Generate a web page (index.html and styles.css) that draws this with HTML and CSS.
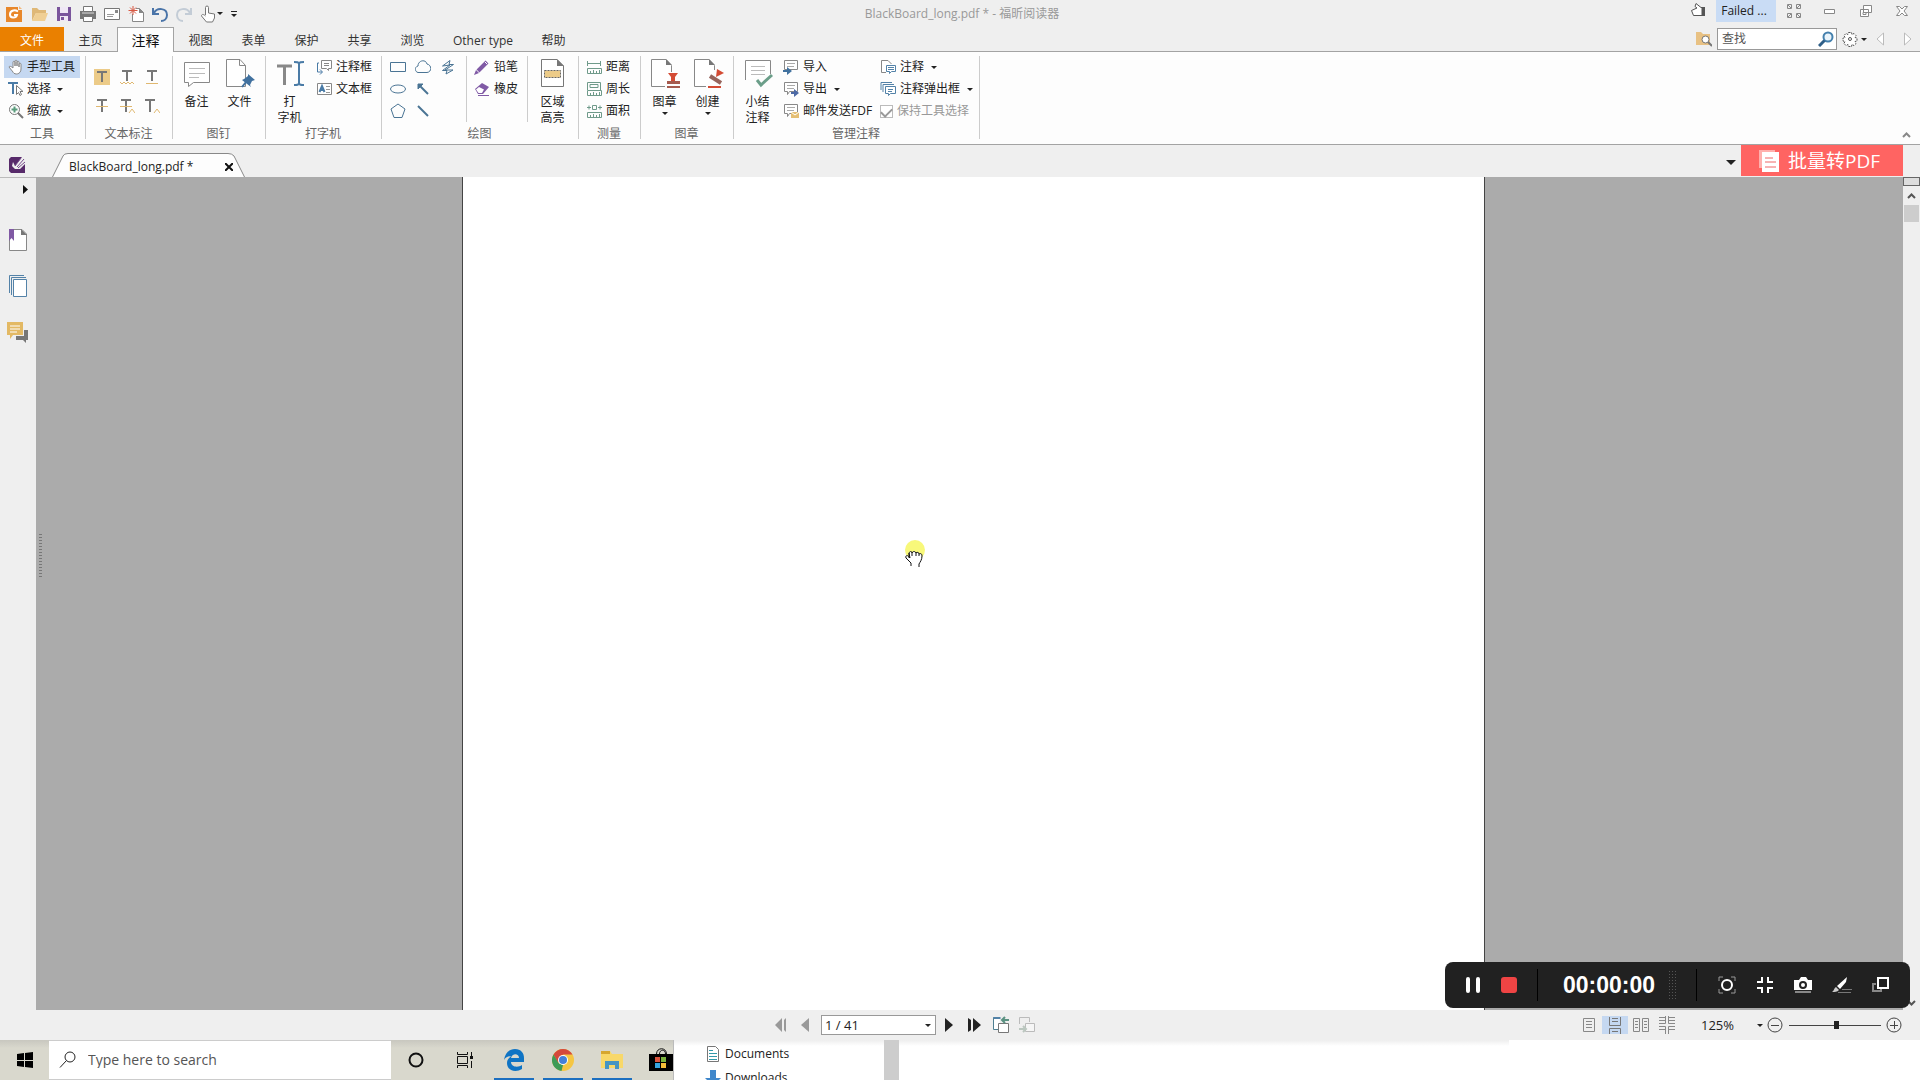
FILE: index.html
```html
<!DOCTYPE html>
<html lang="zh-CN">
<head>
<meta charset="utf-8">
<title>BlackBoard_long.pdf * - 福昕阅读器</title>
<link rel="stylesheet" href="styles.css">
</head>
<body>
<svg class="defs" aria-hidden="true">
  <symbol id="page-lg" viewBox="0 0 30 30"><path d="M3.500 1.500H19L25.500 8V28.500H3.500Z" fill="#fff" stroke="#777"/><path d="M19 1l7 7h-7z" fill="#777"/></symbol>
  <symbol id="note" viewBox="0 0 16 16"><path d="M1.500 1.500h13v9h-8l-2 3v-3h-3z" fill="#fff" stroke="#888"/><path d="M4 4.500h8M4 7.500h7" stroke="#aaa"/></symbol>
  <symbol id="ruler" viewBox="0 0 16 16"><path d="M1.500 9.500h14v5h-14zM4.500 12v2M7.500 11v3M10.500 12v2M13.500 11v3" fill="none" stroke="#6f9a8a"/></symbol>
</svg>

<header class="titlebar">
  <div class="quick">
    <button class="qbtn first" aria-label="福昕"><svg width="18" height="18" viewBox="0 0 18 18"><path d="M1 2h12v3h4v12H1z" fill="#e8872a"/><path d="M14 1l3 3h-3z" fill="#f4b77a"/><path d="M13 6.500C9 4 5 6 5 9.500c0 4 6 4 7 .5H9" fill="none" stroke="#fff" stroke-width="2"/></svg></button>
    <button class="qbtn" aria-label="打开"><svg width="18" height="18" viewBox="0 0 18 18"><path d="M1 3h5l2 2h7v3H5l-4 8z" fill="#dfb877"/><path d="M5 8h12l-3 8H1z" fill="#f0cf94"/></svg></button>
    <button class="qbtn" aria-label="保存"><svg width="18" height="18" viewBox="0 0 18 18"><path d="M2 2h14v14H2z" fill="#7a559c"/><path d="M5 2h8v6H5zM5 11h8v5H5z" fill="#efe8f5"/><path d="M6 12h3v3H6z" fill="#7a559c"/></svg></button>
    <button class="qbtn" aria-label="打印"><svg width="18" height="18" viewBox="0 0 18 18"><path d="M1 6h16v8H1z" fill="#777"/><path d="M4.500 1.500h9v5h-9zM4.500 11.500h9v5h-9z" fill="#fff" stroke="#777"/><path d="M3 8h12" stroke="#ddd"/></svg></button>
    <button class="qbtn" aria-label="邮件"><svg width="18" height="18" viewBox="0 0 18 18"><path d="M1.500 3.500h15v11h-15z" fill="#fff" stroke="#777"/><path d="M4 9.500h7M4 11.500h6" stroke="#999"/><path d="M12 5h3v3h-3z" fill="#888"/></svg></button>
    <button class="qbtn" aria-label="新建"><svg width="18" height="18" viewBox="0 0 18 18"><path d="M9 3.500h3.500l4 4v9h-11V9" fill="#fff" stroke="#888"/><path d="M12 3l5 5h-5z" fill="#888"/><path d="M6 1v9M1.500 5.500h9M3 2.500l6 6M9 2.500l-6 6" stroke="#d85843"/></svg></button>
    <button class="qbtn" aria-label="撤销"><svg width="18" height="18" viewBox="0 0 18 18"><path d="M2 3v6h6" fill="none" stroke="#4a74a8" stroke-width="2"/><path d="M3 8c3-6 13-5 13 2 0 4-3 6-6 6" fill="none" stroke="#4a74a8" stroke-width="2"/></svg></button>
    <button class="qbtn" aria-label="重做"><svg width="18" height="18" viewBox="0 0 18 18"><path d="M16 3v6h-6" fill="none" stroke="#c3ccd6" stroke-width="2"/><path d="M15 8C12 2 2 3 2 10c0 4 3 6 6 6" fill="none" stroke="#c3ccd6" stroke-width="2"/></svg></button>
    <button class="qbtn hand" aria-label="手型"><svg width="18" height="18" viewBox="0 0 18 18"><path d="M6.500 10V2.500a1.500 1.500 0 013 0V8l6 1v4l-2 4h-6l-5-6c0-2 2-2 4 0" fill="#fff" stroke="#777"/></svg><i class="caret"></i></button>
    <button class="qbtn more" aria-label="自定义"><i class="bar"></i><i class="caret"></i></button>
  </div>
  <h1>BlackBoard_long.pdf * - 福昕阅读器</h1>
  <div class="window">
    <button class="plain" aria-label="赞"><svg width="16" height="16" viewBox="0 0 16 16"><path d="M1.500 7.500L7 5 5 3.500 6 .5l5 4h1v8H3.500z" fill="#fff" stroke="#555"/><path d="M12 4h3v9h-3z" fill="#555"/></svg></button>
    <button class="failed">Failed ...</button>
    <button class="wbtn" aria-label="工具栏"><svg width="14" height="14" viewBox="0 0 14 14" fill="none" stroke="#888"><path d="M.5.5h4v4h-4zM9.500.5h4v4h-4zM.5 9.500h4v4h-4zM9.500 9.500h4v4h-4zM1 1l3 3M13 1l-3 3M1 13l3-3M13 13l-3-3"/></svg></button>
    <button class="wbtn" aria-label="最小化"><svg width="12" height="12" viewBox="0 0 12 12"><path d="M.5 4.500h10v4H.5z" fill="#fff" stroke="#888"/></svg></button>
    <button class="wbtn" aria-label="还原"><svg width="12" height="12" viewBox="0 0 12 12" fill="#fff" stroke="#888"><path d="M3.500.5h8v7h-8zM.5 4.500h8v7h-8zM3 7.500h3v2H3z"/></svg></button>
    <button class="wbtn" aria-label="关闭"><svg width="12" height="12" viewBox="0 0 12 12"><path d="M.5 1.500h3L6 4l2.500-2.500h3L8 6l3.500 4.500h-3L6 8l-2.500 2.500h-3L4 6z" fill="#fff" stroke="#888"/></svg></button>
  </div>
</header>

<nav class="tabs">
  <button class="tab file">文件</button>
  <button class="tab">主页</button>
  <button class="tab active">注释</button>
  <button class="tab">视图</button>
  <button class="tab">表单</button>
  <button class="tab">保护</button>
  <button class="tab">共享</button>
  <button class="tab">浏览</button>
  <button class="tab wide">Other type</button>
  <button class="tab">帮助</button>
  <div class="find">
    <button class="plain" aria-label="高级搜索"><svg width="16" height="16" viewBox="0 0 16 16"><path d="M0 1h5l2 2h7v11H0z" fill="#e8c183"/><circle cx="9.500" cy="8.500" r="3.500" fill="#fff" stroke="#777"/><path d="M12 11l4 4" stroke="#777" stroke-width="2"/></svg></button>
    <label class="findbox"><input type="text" placeholder="查找" aria-label="查找"><svg width="16" height="16" viewBox="0 0 16 16"><circle cx="10" cy="6" r="4.500" fill="#eaf4fb" stroke="#4480ad" stroke-width="2"/><path d="M6.500 9.500L1 15" stroke="#2f5f88" stroke-width="3"/></svg></label>
    <button class="plain gear" aria-label="设置"><svg width="16" height="16" viewBox="0 0 16 16" fill="none" stroke="#555"><path d="M6.500 1.500h3l.5 2 2-1 2 2-1 2 2 .5v3l-2 .5 1 2-2 2-2-1-.5 2h-3l-.5-2-2 1-2-2 1-2-2-.5v-3l2-.5-1-2 2-2 2 1z" fill="#fff" stroke-dasharray="2 1"/><circle cx="8" cy="8" r="1.500"/></svg><i class="caret"></i></button>
    <button class="plain arrow" aria-label="上一个"><svg width="8" height="14" viewBox="0 0 8 14"><path d="M7.500 1v12L1 7z" fill="#fff" stroke="#bbb"/></svg></button>
    <button class="plain arrow" aria-label="下一个"><svg width="8" height="14" viewBox="0 0 8 14"><path d="M.5 1v12L7 7z" fill="#fff" stroke="#bbb"/></svg></button>
  </div>
</nav>

<section class="ribbon">
  <div class="group g-tools">
    <div class="tools">
      <div class="rows">
        <button class="row on"><svg width="16" height="16" viewBox="0 0 16 16"><path d="M5 9V3c0-1 2-1 2 0v4-5c0-1 2-1 2 0v5-4c0-1 2-1 2 0v5-3c0-1 2-1 2 0v5c0 6-7 6-8 3L1 8c0-1 2-1 4 1z" fill="#fff" stroke="#888"/></svg>手型工具</button>
        <button class="row"><svg width="16" height="16" viewBox="0 0 16 16"><path d="M0 2h10M5 2v11" stroke="#4a7ba6" stroke-width="2"/><path d="M8.500 4.500v9l2-2 1.500 3 1.500-1-1.500-3h3z" fill="#fff" stroke="#777"/></svg>选择<i class="caret"></i></button>
        <button class="row"><svg width="16" height="16" viewBox="0 0 16 16"><circle cx="6.500" cy="6.500" r="5" fill="#fff" stroke="#777"/><path d="M6.500 3.500v6M3.500 6.500h6" stroke="#5a9c7c" stroke-width="2"/><path d="M10 10l5 5" stroke="#777" stroke-width="2"/></svg>缩放<i class="caret"></i></button>
      </div>
    </div>
    <p>工具</p>
  </div>
  <div class="group g-text">
    <div class="tools">
      <div class="marks">
        <button aria-label="高亮"><svg width="16" height="16" viewBox="0 0 16 16"><path d="M0 0h16v16H0z" fill="#eccb88"/><path d="M3 3h10M8 3v10" stroke="#777" stroke-width="2"/></svg></button>
        <button aria-label="波浪线"><svg width="16" height="16" viewBox="0 0 16 16"><path d="M3 2h10M8 2v10" stroke="#777" stroke-width="2"/><path d="M1 13l2 2 2-2 2 2 2-2 2 2 2-2 2 2" fill="none" stroke="#e0b870"/></svg></button>
        <button aria-label="下划线"><svg width="16" height="16" viewBox="0 0 16 16"><path d="M3 2h10M8 2v10" stroke="#777" stroke-width="2"/><path d="M2 14.500h12" stroke="#e0b870"/></svg></button>
        <button aria-label="删除线"><svg width="16" height="16" viewBox="0 0 16 16"><path d="M3 2h10M8 2v12" stroke="#777" stroke-width="2"/><path d="M2 8.500h12" stroke="#e0b870"/></svg></button>
        <button aria-label="替换"><svg width="16" height="16" viewBox="0 0 16 16"><path d="M2 2h10M7 2v12" stroke="#777" stroke-width="2"/><path d="M1 8.500h12M10 15l3-4 3 4" fill="none" stroke="#e0b870"/></svg></button>
        <button aria-label="插入"><svg width="16" height="16" viewBox="0 0 16 16"><path d="M1 2h10M6 2v12" stroke="#777" stroke-width="2"/><path d="M10 15l3-4 3 4" fill="none" stroke="#e0b870"/></svg></button>
      </div>
    </div>
    <p>文本标注</p>
  </div>
  <div class="group g-pin">
    <div class="tools">
      <button class="big"><svg width="30" height="30" viewBox="0 0 30 30"><path d="M2.500 4.500h25v20h-16l-5 4v-4h-4z" fill="#fff" stroke="#888"/><path d="M7 10.500h16M7 15.500h16M7 19.500h10" stroke="#bbb"/></svg>备注</button>
      <button class="big"><svg width="30" height="30" viewBox="0 0 30 30"><path d="M1.500 1.500H15l5.500 6V28.500H1.500Z" fill="#fff" stroke="#888"/><path d="M14.500 1.500v6h6" fill="none" stroke="#888"/><path d="M23 16l7 6-3 1-2 4 1 2-9-7 2-1 4-3z" fill="#41719f"/><path d="M21 24l-4 5" stroke="#41719f" stroke-width="2"/></svg>文件</button>
    </div>
    <p>图钉</p>
  </div>
  <div class="group g-type">
    <div class="tools">
      <button class="big"><svg width="30" height="30" viewBox="0 0 30 30"><path d="M2 8h15M9.500 8v19" stroke="#888" stroke-width="3"/><path d="M19 4c3 0 5 0 5 2 0-2 2-2 5-2M24 5v21M19 27c3 0 5 0 5-2 0 2 2 2 5 2" fill="none" stroke="#4a7ba6" stroke-width="2"/></svg>打<br>字机</button>
      <div class="rows">
        <button class="row"><svg width="16" height="16" viewBox="0 0 16 16"><path d="M5.500 1.500h10v8h-3v2l-2-2h-5z" fill="#fff" stroke="#888"/><path d="M8 4.500h5M8 6.500h5" stroke="#888"/><path d="M3 4H1.500v9H6M4 10.500L6.500 13 4 15.500" fill="none" stroke="#4a7ba6"/></svg>注释框</button>
        <button class="row"><svg width="16" height="16" viewBox="0 0 16 16"><path d="M1.500 2.500h14v11h-14z" fill="#fff" stroke="#888"/><path d="M3.500 11L6 5l2.500 6M4.500 9h3" fill="none" stroke="#4a7ba6" stroke-width="2"/><path d="M10 5.500h4M10 8.500h4M10 11.500h4" stroke="#999"/></svg>文本框</button>
      </div>
    </div>
    <p>打字机</p>
  </div>
  <div class="group g-draw">
    <div class="tools">
      <div class="shapes">
        <button aria-label="矩形"><svg width="16" height="16" viewBox="0 0 16 16"><path d="M.5 3.500h15v9H.5z"/></svg></button>
        <button aria-label="云形"><svg width="16" height="16" viewBox="0 0 16 16"><path d="M3 13.500C0 13-1 8 3 7c0-6 8-7 9-2 5 1 5 8 0 8.500z"/></svg></button>
        <button aria-label="折线"><svg width="16" height="16" viewBox="0 0 16 16"><path d="M2.500 7L10 1.500 9 5.500h4.500L5 11h8l-7 4 1-3.500H2.500L10 6z"/></svg></button>
        <button aria-label="椭圆"><svg width="16" height="16" viewBox="0 0 16 16"><ellipse cx="8" cy="8" rx="7.500" ry="4"/></svg></button>
        <button aria-label="箭头"><svg width="16" height="16" viewBox="0 0 16 16"><path d="M13 13L4 4" stroke-width="2"/><path d="M3 8V3h5z" fill="#4a7494"/></svg></button>
        <span></span>
        <button aria-label="多边形"><svg width="16" height="16" viewBox="0 0 16 16"><path d="M8 1l7 5-3 8.500H4L1 6z"/></svg></button>
        <button aria-label="直线"><svg width="16" height="16" viewBox="0 0 16 16"><path d="M3 3l10 10" stroke-width="2"/></svg></button>
      </div>
      <div class="rows pens">
        <button class="row"><svg width="16" height="16" viewBox="0 0 16 16"><path d="M4 12l9-9" stroke="#805aa5" stroke-width="4"/><path d="M0 16l2-5 3 3z" fill="#805aa5"/><path d="M11 3l2 2" stroke="#fff"/></svg>铅笔</button>
        <button class="row"><svg width="16" height="16" viewBox="0 0 16 16"><path d="M1 8l7-6 7 4-6 7H4z" fill="#805aa5"/><path d="M2 8.500l3-2.500 5 2.500L8 12H4.500z" fill="#fff"/><path d="M4 14.500h11" stroke="#805aa5"/></svg>橡皮</button>
      </div>
      <button class="big"><svg width="30" height="30" viewBox="0 0 30 30"><use href="#page-lg"/><path d="M6.500 12.500h16v7h-16z" fill="#eccb88" stroke="#666" stroke-dasharray="2 1"/></svg>区域<br>高亮</button>
    </div>
    <p>绘图</p>
  </div>
  <div class="group g-measure">
    <div class="tools">
      <div class="rows">
        <button class="row"><svg width="16" height="16" viewBox="0 0 16 16"><use href="#ruler"/><path d="M1.500 2v5M14.500 2v5M2 4.500h12" stroke="#6f9a8a"/></svg>距离</button>
        <button class="row"><svg width="16" height="16" viewBox="0 0 16 16"><use href="#ruler"/><path d="M1.500 9V1.500h13V9M4 6.500V3.500h8v3z" fill="none" stroke="#6f9a8a"/></svg>周长</button>
        <button class="row"><svg width="16" height="16" viewBox="0 0 16 16"><use href="#ruler"/><path d="M1 4.500h4M3 2.500v4M6.500 2.500h4v4h-4zM12 4.500h4M14 2.500v4" fill="none" stroke="#6f9a8a"/></svg>面积</button>
      </div>
    </div>
    <p>测量</p>
  </div>
  <div class="group g-stamp">
    <div class="tools">
      <button class="big"><svg width="30" height="30" viewBox="0 0 30 30"><path d="M15 28.500H1.500V1.500H16l5.500 6V14" fill="#fff" stroke="#888"/><path d="M16 1l6 6h-6z" fill="#777"/><path d="M18 15h10l-3 4v4h-4v-4z" fill="#d44b34"/><path d="M17 23h13v3H17zM17 28h13v2H17z" fill="#a55a4e"/></svg>图章<i class="caret"></i></button>
      <button class="big"><svg width="30" height="30" viewBox="0 0 30 30"><path d="M13 28.500H1.500V1.500H16l5.500 6V12" fill="#fff" stroke="#888"/><path d="M16 1l6 6h-6z" fill="#777"/><path d="M24 11l7 4-8 4z" fill="#d44b34"/><path d="M17 18l11 7" stroke="#96645c" stroke-width="4"/><path d="M15 29h13" stroke="#d44b34" stroke-width="2"/></svg>创建<i class="caret"></i></button>
    </div>
    <p>图章</p>
  </div>
  <div class="group g-manage">
    <div class="tools">
      <button class="big"><svg width="30" height="30" viewBox="0 0 30 30"><path d="M2.500 22V2.500h25V16" fill="#fff" stroke="#888"/><path d="M8 8.500h14M8 12.500h14M8 16.500h14" stroke="#bbb"/><path d="M14 22l4 5L29 17" fill="none" stroke="#6b9e89" stroke-width="3"/></svg>小结<br>注释</button>
      <div class="rows io">
        <button class="row"><svg width="16" height="16" viewBox="0 0 16 16"><use href="#note"/><path d="M0 11h4V8l5 4-5 4v-3H0z" fill="#41719f"/></svg>导入</button>
        <button class="row"><svg width="16" height="16" viewBox="0 0 16 16"><use href="#note"/><path d="M8 11h3V8l5 4-5 4v-3H8z" fill="#4c69a5"/></svg>导出<i class="caret"></i></button>
        <button class="row"><svg width="16" height="16" viewBox="0 0 16 16"><use href="#note"/><path d="M8 9h8v6H8z" fill="#e5bf74"/><path d="M8 9l4 3 4-3" fill="none" stroke="#fff"/></svg>邮件发送FDF</button>
      </div>
      <div class="rows">
        <button class="row"><svg width="16" height="16" viewBox="0 0 16 16"><path d="M6 13.500H1.500v-12H8L11.500 5" fill="#fff" stroke="#888"/><path d="M6.500 6.500h9v6h-4l-2 2v-2h-3z" fill="#fff" stroke="#5382a8"/><path d="M8 8.500h6M8 10.500h6" stroke="#5382a8"/></svg>注释<i class="caret"></i></button>
        <button class="row"><svg width="16" height="16" viewBox="0 0 16 16"><path d="M1 9V1.500h11M3 11V3.500h11" fill="none" stroke="#5382a8"/><path d="M5.500 5.500h10v7h-5l-2 2v-2h-3z" fill="#fff" stroke="#5382a8"/><path d="M8 8.500h5M8 10.500h4" stroke="#5382a8"/></svg>注释弹出框<i class="caret"></i></button>
        <label class="row keep"><input type="checkbox" checked disabled>保持工具选择</label>
      </div>
    </div>
    <p>管理注释</p>
  </div>
  <button class="plain collapse" aria-label="折叠功能区"><svg width="9" height="6" viewBox="0 0 9 6"><path d="M1 5l3.500-3.500L8 5" fill="none" stroke="#888" stroke-width="2"/></svg></button>
</section>

<div class="doctabs">
  <svg class="mark" width="16" height="16" viewBox="0 0 16 16"><path d="M2 0h12v5l2 2v9H2l-2-2V2z" fill="#572a6a"/><path d="M4 5l2 4 7-9h3v7l-5 5H6L3 9z" fill="#efefef"/><path d="M6 9l6-8M8 10l7-8M9 11l7-6" stroke="#75498b"/></svg>
  <div class="doctab">
    <svg class="shape" width="193" height="24" viewBox="0 0 193 24"><path d="M.5 24L11 3Q12 .5 16 .5H176Q180 .5 182 3L192.500 24" fill="#fdfdfd" stroke="#888"/></svg>
    <span>BlackBoard_long.pdf *</span>
    <button class="plain" aria-label="关闭标签"><svg width="8" height="8" viewBox="0 0 8 8"><path d="M0 0l8 8M8 0L0 8" stroke="#111" stroke-width="2"/></svg></button>
  </div>
  <button class="plain list" aria-label="标签列表"><i class="caret large"></i></button>
  <a class="convert" href="#"><svg width="20" height="22" viewBox="0 0 20 22"><path d="M0 0h16v18H0z" fill="#ffb0ad"/><path d="M3 2h17v20H3z" fill="#fff"/><path d="M6 8h8M6 12h11M6 17h11" stroke="#e66" stroke-width="1"/></svg>批量转PDF</a>
</div>

<main class="work">
  <aside class="side">
    <button class="plain expand" aria-label="展开"><svg width="5" height="9" viewBox="0 0 5 9"><path d="M0 0v9l5-4.500z" fill="#111"/></svg></button>
    <button class="plain" aria-label="书签"><svg width="18" height="22" viewBox="0 0 18 22"><path d="M.5.500H13L17.500 5V21.500H.5z" fill="#fff" stroke="#888"/><path d="M12 0l6 6h-6z" fill="#777"/><path d="M0 0h5v12l-2.500-3L0 12z" fill="#8059a4"/></svg></button>
    <button class="plain" aria-label="页面"><svg width="18" height="22" viewBox="0 0 18 22"><path d="M.5 18V.5H15M2.500 20V2.500H17" fill="none" stroke="#5382a8"/><path d="M4.500 4.500h13v17h-13z" fill="#fff" stroke="#5382a8"/></svg></button>
    <button class="plain" aria-label="注释"><svg width="22" height="22" viewBox="0 0 22 22"><path d="M17 9h4v10h-2v3l-3-3H9v-4h8z" fill="#777"/><path d="M0 1h16v13H6l-3 4v-4H0z" fill="#e3b964"/><path d="M3 5h10M3 8h10M3 11h7" stroke="#fff"/></svg></button>
  </aside>
  <div class="canvas">
    <div class="splitter"><i></i></div>
    <div class="stage"><article class="sheet"></article></div>
  </div>
  <div class="scroll">
    <div class="split"></div>
    <button class="plain" aria-label="向上"><svg width="9" height="6" viewBox="0 0 9 6"><path d="M1 5l3.500-3.500L8 5" fill="none" stroke="#555" stroke-width="2"/></svg></button>
    <div class="thumb"></div>
    <button class="plain down" aria-label="向下"><svg width="9" height="6" viewBox="0 0 9 6"><path d="M1 1l3.500 3.500L8 1" fill="none" stroke="#555" stroke-width="2"/></svg></button>
  </div>
  <svg class="cursor" width="24" height="28" viewBox="0 0 24 28"><circle cx="13" cy="10" r="10" fill="#f8f87a"/><path d="M9 26v-3l-5-5c-1-3 2-3 3-1l1 1-1-5c1-2 3-2 3 0 1-2 3-2 4 0 1-1 3-1 3 1 2-1 3 0 3 2 0 4-2 6-3 8v3" fill="#fff" stroke="#111"/><path d="M10 12v4M14 12v4M17 14v2M7 13v5" stroke="#111"/></svg>
</main>

<footer class="status">
  <div class="pager">
    <button class="plain" aria-label="首页"><svg width="13" height="14" viewBox="0 0 13 14"><path d="M8 0v14L1 7zM10 2l2-2v14l-2-2z" fill="#999"/></svg></button>
    <button class="plain" aria-label="上一页"><svg width="8" height="14" viewBox="0 0 8 14"><path d="M8 0v14L0 7z" fill="#999"/></svg></button>
    <label class="pagebox"><input type="text" value="1 / 41" aria-label="页码"><i class="caret"></i></label>
    <div class="forward">
      <button class="plain" aria-label="下一页"><svg width="8" height="14" viewBox="0 0 8 14"><path d="M0 0v14l8-7z" fill="#222"/></svg></button>
      <button class="plain" aria-label="末页"><svg width="13" height="14" viewBox="0 0 13 14"><path d="M5 0v14l8-7zM0 0l3 2v10l-3 2z" fill="#222"/></svg></button>
    </div>
    <div class="views">
      <button class="plain" aria-label="上一视图"><svg width="16" height="18" viewBox="0 0 16 18"><path d="M6 13.500H.5V1.500H7" fill="#fff" stroke="#4f7f91"/><path d="M.5 2h7" stroke="#5382a8" stroke-width="2"/><path d="M5.500 7.500h10v9h-10z" fill="#fff" stroke="#777"/><path d="M16 4h-6M12 1L9 4l3 3" fill="none" stroke="#5b9282" stroke-width="2"/></svg></button>
      <button class="plain" aria-label="下一视图"><svg width="16" height="18" viewBox="0 0 16 18"><path d="M.5 8V1.500h10V6" fill="none" stroke="#bbb"/><path d="M6.500 7.500h9v8h-9z" fill="#f6f6f6" stroke="#bbb"/><path d="M0 13h6M4 10l3 3-3 3" fill="none" stroke="#bbc7bf" stroke-width="2"/></svg></button>
    </div>
  </div>
  <div class="zoom">
    <button class="mode" aria-label="单页"><svg width="16" height="16" viewBox="0 0 16 16"><path d="M2.500 1.500h11v13h-11zM5 4.500h6M5 7.500h6M5 10.500h6" fill="none" stroke="#888"/></svg></button>
    <button class="mode on" aria-label="连续"><svg width="16" height="18" viewBox="0 0 16 18"><path d="M2.500 1v8.500h11V1M2.500 18v-5.500h11V18M5 2.500h6M5 5.500h6M5 15.500h6" fill="none" stroke="#777"/></svg></button>
    <button class="mode" aria-label="双页"><svg width="16" height="16" viewBox="0 0 16 16"><path d="M.5 1.500h6v13h-6zM9.500 1.500h6v13h-6zM2 4.500h3M2 7.500h3M2 10.500h3M11 4.500h3M11 7.500h3M11 10.500h3" fill="none" stroke="#888"/></svg></button>
    <button class="mode" aria-label="连续双页"><svg width="16" height="18" viewBox="0 0 16 18"><path d="M0 1.500h6M10 1.500h6M0 4.500h6M10 4.500h6M0 7.500h6.500M9.500 7.500H16M0 10.500h6.500M9.500 10.500H16M0 13.500h6M10 13.500h6M6.500 0v7.500M9.500 0v7.500M6.500 10.500V18M9.500 10.500V18" fill="none" stroke="#888"/></svg></button>
    <button class="percent">125%<i class="caret"></i></button>
    <button class="plain" aria-label="缩小"><svg width="16" height="16" viewBox="0 0 16 16" fill="none" stroke="#444"><circle cx="8" cy="8" r="7"/><path d="M4 8.500h8"/></svg></button>
    <input type="range" min="0" max="100" value="52" aria-label="缩放">
    <button class="plain" aria-label="放大"><svg width="16" height="16" viewBox="0 0 16 16" fill="none" stroke="#444"><circle cx="8" cy="8" r="7"/><path d="M4 8.500h8M8.500 4v8"/></svg></button>
  </div>
</footer>

<div class="taskbar">
  <div class="dock">
    <button class="plain start" aria-label="Start"><svg width="16" height="16" viewBox="0 0 16 16"><path d="M0 2l7-1v7H0zM8 1l8-1v8H8zM0 9h7v6l-7-1zM8 9h8v7l-8-1z" fill="#000"/></svg></button>
    <label class="search"><svg width="18" height="18" viewBox="0 0 18 18" fill="none" stroke="#222"><circle cx="11" cy="6" r="5"/><path d="M7.500 9.500L1 16.500"/></svg><input type="text" placeholder="Type here to search" aria-label="Type here to search"></label>
    <button class="app" aria-label="Cortana"><svg width="16" height="16" viewBox="0 0 16 16"><circle cx="8" cy="8" r="6.500" fill="none" stroke="#111" stroke-width="2"/></svg></button>
    <button class="app" aria-label="Task View"><svg width="16" height="16" viewBox="0 0 16 16"><path d="M.5 4.500h10v7H.5zM.5 0v2.500h10V0M.5 16v-2.500h10V16M14.500 0v4M14.500 9v7" fill="none" stroke="#111"/><path d="M13 4h3v3h-3z" fill="#111"/></svg></button>
    <button class="app open" aria-label="Edge"><svg width="22" height="22" viewBox="0 0 22 22"><path d="M1 11C2 4 6 0 12 0c6 0 9 4 9 9v4H8c0 5 7 6 11 3v4C13 24 4 22 4 14c0-4 3-6 5-7C5 7 3 8 1 11zM8 9h8c0-5-7-5-8 0z" fill="#0f74c4"/></svg></button>
    <button class="app open" aria-label="Chrome"><svg width="22" height="22" viewBox="0 0 22 22"><circle cx="11" cy="11" r="11" fill="#f5c643"/><path d="M1.500 5.500A11 11 0 0120.500 5.500H11L6 14z" fill="#d5493c"/><path d="M1.500 5.500L6.500 14 11 16 9.500 22A11 11 0 011.500 5.500z" fill="#3f9b57"/><circle cx="11" cy="11" r="5" fill="#fff"/><circle cx="11" cy="11" r="4" fill="#4580d8"/></svg></button>
    <button class="app open" aria-label="File Explorer"><svg width="22" height="20" viewBox="0 0 22 20"><path d="M0 1h9l2 3h11v14H0z" fill="#f8d869"/><path d="M0 1h9v3H0z" fill="#d6a72f"/><path d="M4 19v-8h14v8h-4v-4H8v4z" fill="#4595c3"/></svg></button>
    <button class="app store" aria-label="Store"><svg width="24" height="24" viewBox="0 0 24 24"><path d="M0 6h24v17H0z" fill="#000"/><path d="M7.500 6c0-7 10-7 10 0M10.500 6c0-5 6-5 6 0" fill="none" stroke="#111"/><path d="M6 9h5v5H6z" fill="#d9533c"/><path d="M12 9h5v5h-5z" fill="#7ab33d"/><path d="M6 15h5v5H6z" fill="#35a4dd"/><path d="M12 15h5v5h-5z" fill="#f3bd38"/></svg></button>
  </div>
  <div class="explorer">
    <a href="#"><svg width="14" height="16" viewBox="0 0 14 16"><path d="M1.500.5h8l3 3v12h-11z" fill="#fff" stroke="#777"/><path d="M3 4.500h4M3 7.500h8M3 10.500h8M3 13.500h8" stroke="#39a"/></svg>Documents</a>
    <a href="#"><svg width="16" height="16" viewBox="0 0 16 16"><path d="M5 0h6v8h5l-8 8-8-8h5z" fill="#3f87cb"/></svg>Downloads</a>
  </div>
  <div class="explorer-bar"></div>
  <div class="blank"></div>
</div>

<div class="recorder">
  <button class="plain" aria-label="Pause"><svg width="16" height="18" viewBox="0 0 16 18"><path d="M3 3v12M13 3v12" stroke="#fff" stroke-width="4" stroke-linecap="round"/></svg></button>
  <button class="plain stop" aria-label="Stop"></button>
  <div class="clock"><time>00:00:00</time><i class="grip"></i></div>
  <div class="acts">
    <button class="plain" aria-label="Region"><svg width="18" height="18" viewBox="0 0 18 18" fill="none"><circle cx="9" cy="9" r="5" stroke="#fff" stroke-width="2"/><path d="M1 5V1h4M13 1h4v4M17 13v4h-4M5 17H1v-4" stroke="#999" stroke-width="1"/></svg></button>
    <button class="plain" aria-label="Shrink"><svg width="18" height="18" viewBox="0 0 18 18" fill="none" stroke="#fff" stroke-width="2"><path d="M1 6h5V1M12 1v5h5M17 12h-5v5M6 17v-5H1"/></svg></button>
    <button class="plain" aria-label="Snapshot"><svg width="18" height="18" viewBox="0 0 18 18"><path d="M0 4h5l2-3h5l2 3h4v10H0z" fill="#fff"/><circle cx="9" cy="9" r="3" fill="#fff" stroke="#222" stroke-width="2"/><path d="M1 16h16" stroke="#888" stroke-width="2"/></svg></button>
    <button class="plain" aria-label="Draw"><svg width="20" height="18" viewBox="0 0 20 18"><path d="M15 1L5 10l3 3 6-7z" fill="#fff"/><path d="M4 11l3 3c-2 2-4 2-7 2 2-1 2-4 4-5z" fill="#ccc"/><path d="M10 13.500h10M6 16.500h13" stroke="#777"/></svg></button>
    <button class="plain" aria-label="Window"><svg width="18" height="18" viewBox="0 0 18 18" fill="none"><path d="M6 2h10v10H6z" stroke="#fff" stroke-width="2"/><path d="M4 8H1v7h8v-2" stroke="#888" stroke-width="2"/></svg></button>
  </div>
</div>
</body>
</html>
```
FILE: styles.css
```css
* { box-sizing: border-box; }
html, body { height: 100%; }
body {
  margin: 0;
  display: flex;
  flex-direction: column;
  overflow: hidden;
  position: relative;
  background: #efefef;
  color: #222;
  font: 12px/16px "Open Sans", "Noto Sans CJK SC", sans-serif;
}
button, input { font: inherit; color: inherit; }
button { border: 0; padding: 0; background: none; }
p, h1 { margin: 0; font-size: 12px; font-weight: 400; }
svg { display: block; flex: none; }
a { color: inherit; text-decoration: none; }
.defs { position: absolute; width: 0; height: 0; }
.plain { display: flex; align-items: center; justify-content: center; }
.caret { flex: none; width: 0; height: 0; border: 3px solid transparent; border-top-color: #222; border-bottom: 0; }
.caret.large { border-width: 5px; border-bottom: 0; }

/* Title bar */
.titlebar { display: grid; grid-template-columns: 1fr auto 1fr; height: 27px; flex: none; }
.quick { display: flex; align-items: center; }
.qbtn { display: flex; align-items: center; justify-content: center; width: 24px; height: 26px; }
.qbtn.first { width: 28px; }
.qbtn.hand { justify-content: flex-start; width: 26px; padding-left: 3px; }
.qbtn.more { flex-direction: column; gap: 2px; }
.bar { width: 6px; height: 1px; background: #222; }
.titlebar h1 { padding-left: 4px; line-height: 27px; color: #999; }
.window { display: flex; justify-content: flex-end; align-items: flex-start; }
.window > button { height: 22px; }
.window .failed { width: 60px; margin-left: 10px; padding-right: 4px; background: #c9dcf5; }
.wbtn { width: 36px; display: flex; align-items: center; justify-content: center; }

/* Ribbon tabs */
.tabs { display: flex; height: 25px; flex: none; border-bottom: 1px solid #a3a3a3; }
.tab { width: 53px; height: 24px; padding-top: 3px; color: #333; }
.tab.file { width: 64px; background: #ea8000; color: #fff; }
.tab.active { width: 57px; height: 25px; padding-top: 2px; background: #fdfdfd; border: 1px solid #a3a3a3; border-bottom: 0; font-size: 14px; color: #111; }
.tab.wide { width: 88px; }
.find { display: flex; align-items: center; margin-left: auto; padding-right: 8px; }
.findbox { display: flex; align-items: center; width: 120px; height: 22px; margin: 0 5px; padding: 0 2px 0 4px; background: #fff; border: 1px solid #999; }
.findbox input { flex: 1; min-width: 0; border: 0; padding: 0; background: none; }
.findbox input::placeholder { color: #555; opacity: 1; }
.gear { gap: 3px; margin-right: 9px; }
.arrow { width: 8px; }
.arrow + .arrow { margin-left: 20px; }

/* Ribbon */
.ribbon { display: flex; height: 93px; flex: none; background: #fdfdfd; border-bottom: 1px solid #a3a3a3; }
.group { display: flex; flex-direction: column; position: relative; padding-top: 4px; }
.group::after { content: ""; position: absolute; right: 0; top: 4px; bottom: 5px; width: 1px; background: #ccc; }
.group p { height: 24px; padding-right: 2px; line-height: 24px; text-align: center; color: #666; }
.tools { display: flex; flex: none; height: 66px; }
.g-tools { width: 86px; }
.g-text { width: 87px; }
.g-pin { width: 93px; }
.g-type { width: 116px; }
.g-draw { width: 197px; }
.g-measure { width: 62px; }
.g-stamp { width: 93px; }
.g-manage { width: 246px; }
.rows { display: grid; grid-auto-rows: 22px; align-content: start; }
.row { display: flex; align-items: center; gap: 4px; padding: 0 4px; white-space: nowrap; }
.row .caret { margin-left: 3px; }
.row.on { background: #c5d8f1; }
.g-tools .row { padding-right: 5px; }
.g-tools .tools { padding-left: 4px; }
.g-tools .row { gap: 3px; }
.marks { display: grid; grid-template-columns: repeat(3, 25px); grid-auto-rows: 29px; padding: 6px 0 0 3px; }
.marks button, .shapes button { display: flex; align-items: center; justify-content: center; }
.big { display: flex; flex-direction: column; align-items: center; width: 43px; padding-top: 2px; text-align: center; }
.big svg { margin-bottom: 6px; overflow: visible; }
.big .caret { margin-top: 2px; }
.g-pin .tools, .g-type .tools, .g-stamp .tools, .g-manage .tools { padding-left: 2px; }
.g-type .rows { margin-left: 1px; }
.shapes { display: grid; grid-template-columns: repeat(3, 25px); grid-auto-rows: 22px; width: 84px; padding-left: 3px; fill: none; stroke: #4a7494; }
.pens { width: 62px; padding-left: 3px; border: solid #ccc; border-width: 0 1px; }
.g-draw .big { margin-left: 3px; }
.g-measure .tools { padding-left: 3px; }
.io { width: 97px; }
.keep { color: #999; }
.keep input { appearance: none; width: 13px; height: 13px; margin: 0; border: 1px solid #bbb; background: #fff; display: grid; place-items: center; }
.keep input::before { content: ""; width: 9px; height: 5px; border: solid #999; border-width: 0 0 2px 2px; transform: rotate(-45deg); }
.collapse { margin: auto 9px 6px auto; }

/* Document tabs */
.doctabs { display: flex; align-items: flex-end; flex: none; height: 32px; padding-right: 17px; }
.mark { margin: 0 27px 4px 9px; }
.doctab { display: flex; align-items: center; justify-content: space-between; position: relative; width: 193px; height: 24px; padding: 4px 12px 0 17px; }
.shape { position: absolute; inset: 0; }
.doctab span, .doctab button { position: relative; }
.list { margin: 0 5px 12px auto; }
.convert { display: flex; align-items: center; justify-content: center; gap: 9px; align-self: flex-start; width: 162px; height: 31px; padding-right: 5px; background: #ff6462; color: #fff; font-size: 19px; line-height: 24px; }

/* Work area */
.work { display: flex; flex: 1; min-height: 0; position: relative; }
.side { display: flex; flex-direction: column; align-items: center; gap: 24px; width: 36px; border-top: 1px solid #bbb; }
.side .expand { align-self: flex-end; margin: 7px 8px 11px 0; }
.canvas { display: flex; flex: 1; background: #ababab; }
.splitter { display: flex; align-items: center; width: 8px; padding-left: 3px; }
.splitter i { width: 3px; height: 44px; margin-bottom: 76px; background: repeating-linear-gradient(#777 0 1px, transparent 1px 3px); }
.stage { flex: 1; display: flex; justify-content: center; }
.sheet { width: 55%; background: #fff; border: solid #444; border-width: 0 1px; }
.scroll { display: flex; flex-direction: column; align-items: center; width: 17px; }
.split { width: 17px; height: 9px; border: 1px solid #666; background: #ddd; }
.scroll button { height: 19px; }
.thumb { width: 15px; height: 17px; background: #cdcdcd; }
.scroll .down { margin-top: auto; height: 14px; }
.cursor { position: absolute; left: 47%; top: 363px; }

/* Status bar */
.status { display: flex; align-items: center; justify-content: space-between; flex: none; height: 30px; padding: 0 18px 0 40%; }
.pager { display: flex; align-items: center; gap: 12px; padding-left: 6px; }
.pagebox { display: flex; align-items: center; width: 115px; height: 20px; padding: 0 4px 0 3px; background: #fff; border: 1px solid #999; font-size: 13px; }
.pagebox input { flex: 1; min-width: 0; border: 0; padding: 0; background: none; }
.pager > .plain:nth-child(2) { padding-left: 2px; }
.forward { display: flex; gap: 15px; margin-left: -3px; }
.views { display: flex; gap: 10px; }
.zoom { display: flex; align-items: center; }
.mode { display: flex; align-items: center; justify-content: center; width: 26px; height: 18px; }
.mode.on { background: #c5d8f1; }
.percent { display: flex; align-items: center; justify-content: space-between; width: 62px; margin: 0 4px 0 21px; font-size: 13px; }
.zoom input { appearance: none; width: 92px; height: 16px; margin: 0 5px 0 6px; background: linear-gradient(#444, #444) center / 100% 1px no-repeat; }
.zoom input::-webkit-slider-thumb { appearance: none; width: 5px; height: 8px; background: #222; }

/* Desktop taskbar */
.taskbar { display: flex; flex: none; height: 40px; overflow: hidden; background: #fff; }
.dock { display: flex; width: 673px; overflow: hidden; background: linear-gradient(#c8c7bf, #d9d8cd 8px); }
.start { width: 49px; }
.search { display: flex; align-items: center; gap: 11px; width: 342px; padding-left: 10px; background: #fff; border: solid #ccc; border-width: 1px 0; font-size: 14px; }
.search input { flex: 1; border: 0; padding: 0; background: none; }
.search input::placeholder { color: #555; opacity: 1; }
.app { display: flex; align-items: center; justify-content: center; flex: none; width: 49px; padding: 2px 0; }
.app.open { background: linear-gradient(#1c6fc0, #1c6fc0) bottom / 40px 2px no-repeat; }
.app.store { width: 37px; justify-content: flex-end; }
.explorer { width: 211px; padding: 2px 0 0 31px; border-left: 1px solid #bbb; background: linear-gradient(#eee, #fff 6px); }
.explorer a { display: flex; align-items: center; gap: 4px; height: 24px; line-height: 18px; }
.explorer svg { width: 16px; }
.explorer-bar { width: 15px; background: #cdcdcd; }
.blank { width: 610px; background: linear-gradient(#eee, #fff 6px); }

/* Screen recorder overlay */
.recorder { position: absolute; right: 10px; bottom: 72px; display: flex; align-items: center; height: 46px; padding: 0 20px; border-radius: 8px; background: #212121; color: #fff; }
.stop { width: 16px; height: 16px; margin: 0 20px; border-radius: 3px; background: #ef4444; }
.clock { display: flex; align-items: center; gap: 13px; height: 32px; padding: 0 19px 0 25px; border: solid #000; border-width: 0 1px; }
.clock time { font: bold 23px/32px "Liberation Sans", sans-serif; }
.grip { width: 9px; height: 30px; background: radial-gradient(circle, #555 1px, transparent 1px) 0 0 / 3px 3px; }
.acts { display: flex; gap: 20px; padding-left: 21px; }
```
